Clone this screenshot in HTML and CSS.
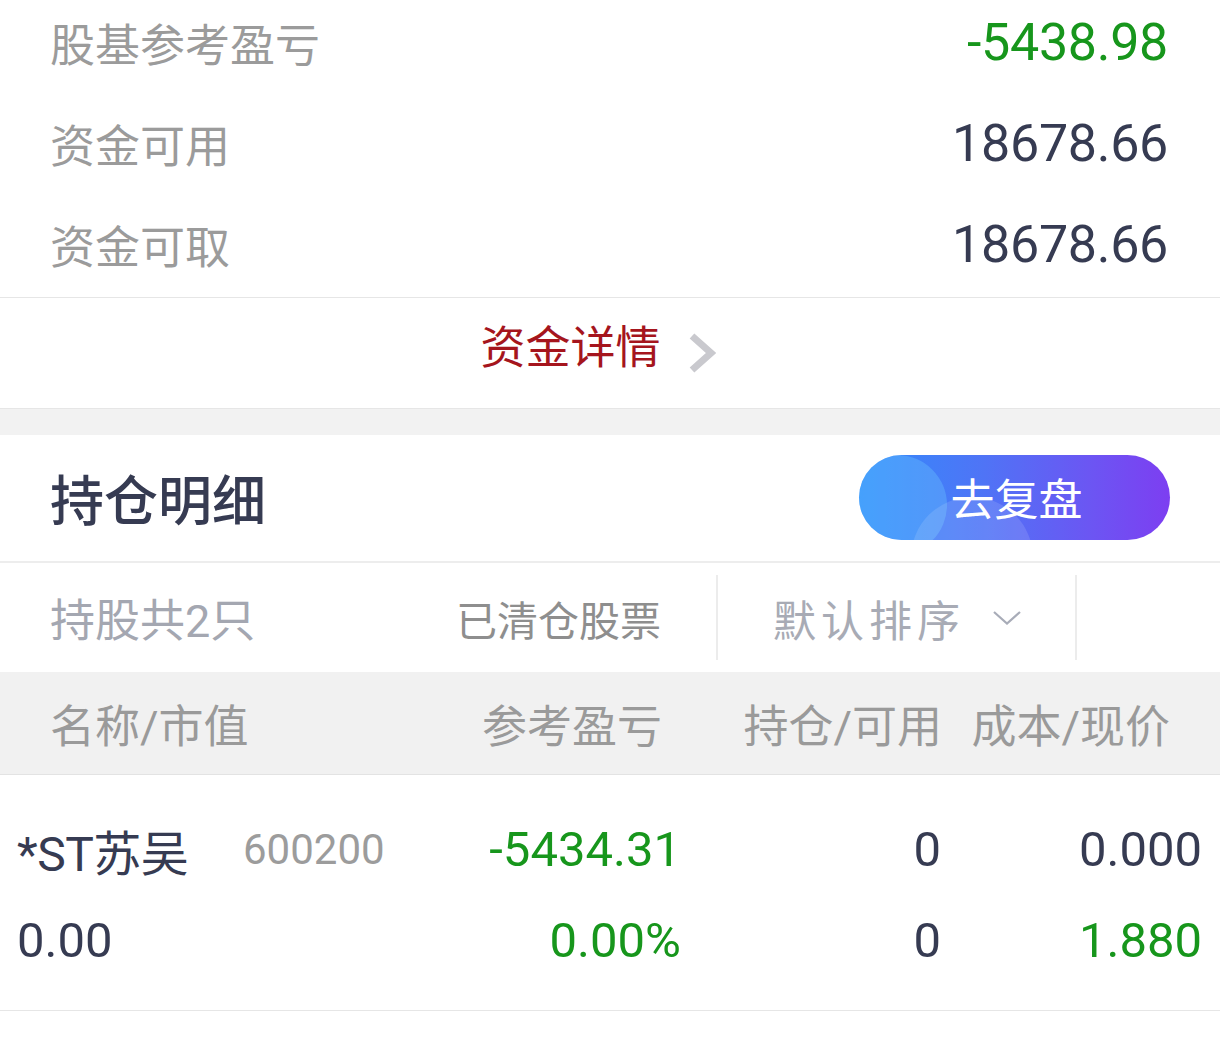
FILE: index.html
```html
<!DOCTYPE html>
<html lang="zh-CN">
<head>
<meta charset="utf-8">
<title>持仓</title>
<link rel="stylesheet" href="styles.css">
</head>
<body>
<div class="page">
  <section class="summary">
    <div class="kv"><span class="k">股基参考盈亏</span><span class="v green">-5438.98</span></div>
    <div class="kv"><span class="k">资金可用</span><span class="v">18678.66</span></div>
    <div class="kv"><span class="k">资金可取</span><span class="v">18678.66</span></div>
  </section>
  <a class="detail" href="#">
    <span class="detail-text">资金详情</span>
    <svg class="chev" width="28" height="42" viewBox="0 0 28 42"><polyline points="4,4 23,21 4,38" fill="none" stroke="#c9c9ce" stroke-width="7"/></svg>
  </a>
  <div class="gap"></div>
  <section class="holdings">
    <div class="hd">
      <h2 class="title">持仓明细</h2>
      <button class="review"><span>去复盘</span></button>
    </div>
    <div class="filters">
      <div class="f-count">持股共2只</div>
      <div class="f-cleared">已清仓股票</div>
      <div class="sep"></div>
      <div class="f-sort">默认排序<svg class="down" width="28" height="14" viewBox="0 0 28 14"><polyline points="1,1 14,12.5 27,1" fill="none" stroke="#a8acb8" stroke-width="2.2"/></svg></div>
      <div class="sep"></div>
    </div>
    <div class="thead">
      <div class="c1">名称/市值</div>
      <div class="c2">参考盈亏</div>
      <div class="c3">持仓/可用</div>
      <div class="c4">成本/现价</div>
    </div>
    <div class="stock">
      <div class="line">
        <div class="d1"><span class="name">*ST苏吴</span><span class="code">600200</span></div>
        <div class="d2 green">-5434.31</div>
        <div class="d3">0</div>
        <div class="d4">0.000</div>
      </div>
      <div class="line">
        <div class="d1">0.00</div>
        <div class="d2 green">0.00%</div>
        <div class="d3">0</div>
        <div class="d4 green">1.880</div>
      </div>
    </div>
  </section>
</div>
</body>
</html>
```

FILE: styles.css
```css
* { box-sizing: border-box; margin: 0; padding: 0; }
html, body { background: #ffffff; }
body {
  font-family: Roboto, "Noto Sans CJK SC", sans-serif;
  color: #363b52;
  overflow: hidden;
}
.page { width: 1220px; }

.green { color: #17961c; }

/* summary */
.summary {
  margin-top: -8px;
  padding-bottom: 2px;
  border-bottom: 1px solid #e6e6e6;
}
.kv {
  height: 101px;
  display: flex;
  align-items: center;
  justify-content: space-between;
  padding: 0 52px 0 50px;
}
.kv .k {
  font-family: "Noto Sans CJK SC", sans-serif;
  font-size: 45px;
  color: #9b9b9b;
}
.kv .v {
  font-size: 52px;
  letter-spacing: -0.3px;
}
.kv .v.green { color: #17961c; }

/* detail link */
.detail {
  height: 111px;
  display: flex;
  align-items: center;
  justify-content: center;
  padding-right: 24px;
  gap: 27px;
  text-decoration: none;
  border-bottom: 1px solid #e6e6e6;
}
.detail-text {
  font-family: "Noto Sans CJK SC", sans-serif;
  font-size: 45px;
  color: #a5151d;
  margin-bottom: 18px;
}
.chev { display: block; }

.gap { height: 26px; background: #f2f2f2; }

/* holdings header */
.hd {
  height: 128px;
  display: flex;
  align-items: center;
  justify-content: space-between;
  padding: 0 50px 2px 50px;
  border-bottom: 2px solid #ededed;
}
.title {
  font-family: "Noto Sans CJK SC", sans-serif;
  font-size: 54px;
  font-weight: 500;
  color: #363b52;
}
.review {
  position: relative;
  width: 311px;
  height: 85px;
  border: none;
  border-radius: 43px;
  overflow: hidden;
  background: linear-gradient(90deg, #318cfb 0%, #4f74f6 40%, #6c55f3 75%, #7d3ef1 100%);
  font-family: "Noto Sans CJK SC", sans-serif;
  font-size: 44px;
  color: #ffffff;
  cursor: pointer;
}
.review::before {
  content: "";
  position: absolute;
  left: -12px;
  top: 0;
  width: 100px;
  height: 100px;
  border-radius: 50%;
  background: rgba(110, 200, 255, 0.35);
}
.review::after {
  content: "";
  position: absolute;
  left: 52px;
  top: 42px;
  width: 122px;
  height: 122px;
  border-radius: 50%;
  background: rgba(255, 255, 255, 0.12);
}
.review span { position: relative; z-index: 1; margin-left: 4px; }

/* filters */
.filters {
  height: 109px;
  display: flex;
  align-items: center;
}
.f-count {
  width: 456px;
  padding-left: 50px;
  font-size: 45px;
  color: #a4a7b1;
}
.f-cleared {
  width: 260px;
  font-family: "Noto Sans CJK SC", sans-serif;
  font-size: 41px;
  color: #8e8e8e;
}
.sep { width: 2px; height: 85px; background: #ececec; }
.f-sort {
  width: 357px;
  padding-left: 55px;
  display: flex;
  align-items: center;
  font-family: "Noto Sans CJK SC", sans-serif;
  font-size: 43px;
  letter-spacing: 5px;
  color: #a8abb5;
}
.down { margin-left: 28px; }

/* table head */
.thead {
  height: 103px;
  display: flex;
  align-items: center;
  padding: 0 50px;
  background: #f1f1f1;
  border-bottom: 1px solid #e3e3e3;
  font-size: 45px;
  color: #9a9a9a;
}
.thead .c1 { width: 400px; }
.thead .c2 { width: 212px; text-align: right; }
.thead .c3 { width: 280px; text-align: right; }
.thead .c4 { width: 228px; text-align: right; }

/* stock rows */
.stock {
  padding: 29px 18px 24px 17px;
  border-bottom: 1px solid #e6e6e6;
}
.line {
  height: 91px;
  display: flex;
  align-items: center;
  font-size: 49px;
}
.d1 { width: 400px; display: flex; align-items: center; }
.d2 { width: 264px; text-align: right; }
.d3 { width: 260px; text-align: right; }
.d4 { width: 261px; text-align: right; }
.d4.green, .d2.green { color: #17961c; }
.name {
  font-size: 48px;
  width: 226px;
  letter-spacing: -0.5px;
}
.code {
  font-size: 42px;
  color: #9c9c9c;
}
```
